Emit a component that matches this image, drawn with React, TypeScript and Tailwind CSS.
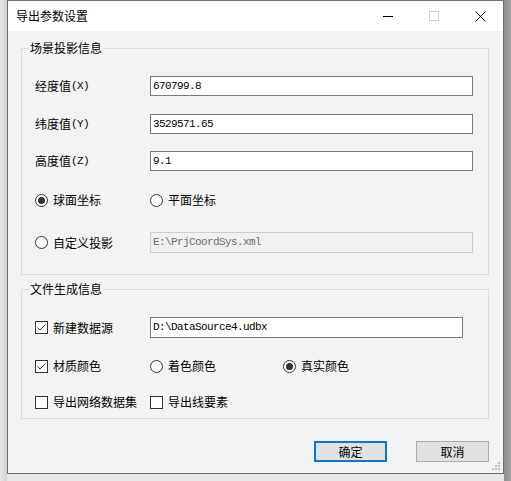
import React from 'react';

const mono = "font-['Liberation_Mono',monospace] text-[11px] tracking-[-0.6px]";

function Radio({ checked }: { checked?: boolean }) {
  return (
    <svg width="13" height="13" viewBox="0 0 13 13" className="flex-none">
      <circle cx="6.5" cy="6.5" r="6" fill="#fff" stroke="#333" strokeWidth="1" />
      {checked && <circle cx="6.5" cy="6.5" r="3.5" fill="#333" />}
    </svg>
  );
}

function Check({ checked }: { checked?: boolean }) {
  return (
    <svg width="13" height="13" viewBox="0 0 13 13" className="flex-none">
      <rect x="0.5" y="0.5" width="12" height="12" fill="#fff" stroke="#333" />
      {checked && <path d="M2.5 6.5 L5 9 L10.5 3.5" fill="none" stroke="#333" strokeWidth="1" />}
    </svg>
  );
}

function Option({ kind, checked, label, className = '' }: { kind: 'radio' | 'check'; checked?: boolean; label: string; className?: string }) {
  return (
    <div className={`flex items-center gap-[5px] ${className}`}>
      {kind === 'radio' ? <Radio checked={checked} /> : <Check checked={checked} />}
      <span className="text-[12px] leading-none">{label}</span>
    </div>
  );
}

function Field({ value, disabled, w, h = 'h-[20px]' }: { value: string; disabled?: boolean; w: string; h?: string }) {
  return (
    <div
      className={`${w} ${h} flex items-center pl-[2px] border ${
        disabled ? 'border-[#cccccc] bg-[#f0f0f0] text-[#6d6d6d]' : 'border-[#7a7a7a] bg-white text-black'
      } ${mono}`}
    >
      {value}
    </div>
  );
}

function Group({ title, h, children }: { title: string; h: string; children: React.ReactNode }) {
  return (
    <div className={`relative w-[468px] ${h} border border-[#dcdcdc] flex flex-col pl-[13px]`}>
      <span className="absolute left-[7px] top-[-8px] px-[1px] bg-[#f3f3f3] text-[12px] leading-[14px]">{title}</span>
      {children}
    </div>
  );
}

function Label({ cn, en }: { cn: string; en: string }) {
  return (
    <div className="w-[115px] flex items-center text-[12px] leading-none">
      <span>{cn}</span>
      <span className={mono}>{en}</span>
    </div>
  );
}

export default function App() {
  return (
    <div className="w-[511px] h-[481px] flex overflow-hidden bg-[#dcdcdc] font-['Noto_Sans_CJK_SC',sans-serif] text-black">
      <div className="w-[7px] bg-gradient-to-r from-[#e6e6e6] to-[#d2d2d2]" />
      <div className="flex flex-col w-[497px]">
        <div className="relative h-[474px] border border-[#6f6f6f] bg-[#f3f3f3] flex flex-col">
          <div className="h-[30px] bg-white flex items-center">
            <span className="pl-[8px] text-[12px] leading-none flex-1">导出参数设置</span>
            <div className="w-[46px] h-full flex items-center justify-center">
              <svg width="10" height="10" viewBox="0 0 10 10"><path d="M0 5.5 H10" stroke="#000" strokeWidth="1" /></svg>
            </div>
            <div className="w-[46px] h-full flex items-center justify-center">
              <svg width="10" height="10" viewBox="0 0 10 10"><rect x="0.5" y="0.5" width="9" height="9" fill="none" stroke="#cccccc" /></svg>
            </div>
            <div className="w-[46px] h-full flex items-center justify-center">
              <svg width="11" height="11" viewBox="0 0 11 11"><path d="M0.5 0.5 L10.5 10.5 M10.5 0.5 L0.5 10.5" stroke="#000" strokeWidth="1" /></svg>
            </div>
          </div>

          <div className="flex flex-col pl-[13px]">
            <div className="mt-[17px]">
              <Group title="场景投影信息" h="h-[227px]">
                <div className="mt-[27px] h-[20px] flex items-center">
                  <Label cn="经度值" en="(X)" />
                  <Field value="670799.8" w="w-[323px]" />
                </div>
                <div className="mt-[18px] h-[20px] flex items-center">
                  <Label cn="纬度值" en="(Y)" />
                  <Field value="3529571.65" w="w-[323px]" />
                </div>
                <div className="mt-[17px] h-[20px] flex items-center">
                  <Label cn="高度值" en="(Z)" />
                  <Field value="9.1" w="w-[323px]" />
                </div>
                <div className="mt-[19px] h-[20px] flex items-center">
                  <Option kind="radio" checked label="球面坐标" className="w-[115px]" />
                  <Option kind="radio" label="平面坐标" />
                </div>
                <div className="mt-[22px] h-[21px] flex items-center">
                  <Option kind="radio" label="自定义投影" className="w-[115px]" />
                  <Field value="E:\PrjCoordSys.xml" disabled w="w-[323px]" h="h-[21px]" />
                </div>
              </Group>
            </div>

            <div className="mt-[14px]">
              <Group title="文件生成信息" h="h-[130px]">
                <div className="mt-[27px] h-[21px] flex items-center">
                  <Option kind="check" checked label="新建数据源" className="w-[115px]" />
                  <Field value="D:\DataSource4.udbx" w="w-[313px]" h="h-[21px]" />
                </div>
                <div className="mt-[18px] h-[20px] flex items-center">
                  <Option kind="check" checked label="材质颜色" className="w-[115px]" />
                  <Option kind="radio" label="着色颜色" className="w-[133px]" />
                  <Option kind="radio" checked label="真实颜色" />
                </div>
                <div className="mt-[16px] h-[20px] flex items-center">
                  <Option kind="check" label="导出网络数据集" className="w-[115px]" />
                  <Option kind="check" label="导出线要素" />
                </div>
              </Group>
            </div>

            <div className="mt-[22px] w-[468px] flex justify-end gap-[29px]">
              <button className="w-[73px] h-[21px] border-2 border-[#0078d7] bg-[#e1e1e1] text-[12px] leading-none flex items-center justify-center">
                确定
              </button>
              <button className="w-[73px] h-[21px] border border-[#adadad] bg-[#e1e1e1] text-[12px] leading-none flex items-center justify-center">
                取消
              </button>
            </div>
          </div>

          <svg width="10" height="10" viewBox="0 0 10 10" className="absolute right-[2px] bottom-[2px]">
            <rect x="7" y="1" width="2" height="2" fill="#bcbcbc" />
            <rect x="4" y="4" width="2" height="2" fill="#bcbcbc" />
            <rect x="7" y="4" width="2" height="2" fill="#bcbcbc" />
            <rect x="1" y="7" width="2" height="2" fill="#bcbcbc" />
            <rect x="4" y="7" width="2" height="2" fill="#bcbcbc" />
            <rect x="7" y="7" width="2" height="2" fill="#bcbcbc" />
          </svg>
        </div>
        <div className="flex-1 bg-[#e8e8e8]" />
      </div>
      <div className="flex-1 bg-gradient-to-r from-[#8c8c8c] to-[#a6a6a6]" />
    </div>
  );
}
